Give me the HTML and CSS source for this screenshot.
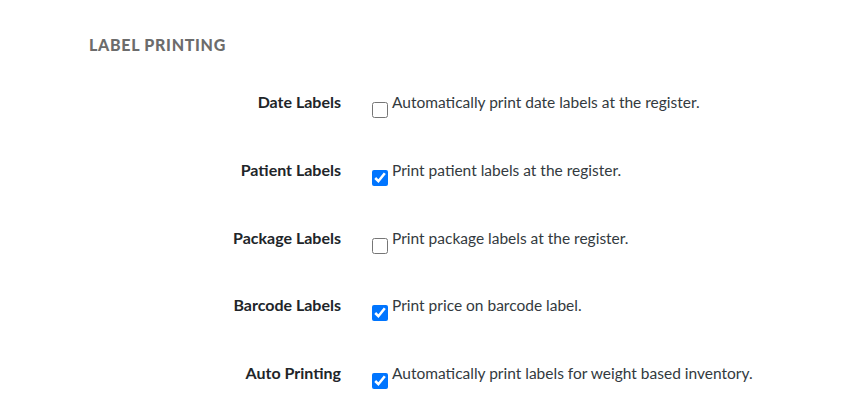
FILE: index.html
```html
<!DOCTYPE html>
<html>
<head>
<meta charset="utf-8">
<link rel="stylesheet" href="styles.css">
</head>
<body>
<section class="settings">
  <h2 class="section-title">LABEL PRINTING</h2>
  <div class="rows">
    <div class="row">
      <label class="row-label">Date Labels</label>
      <div class="row-control"><input type="checkbox" class="cb"><span class="desc">Automatically print date labels at the register.</span></div>
    </div>
    <div class="row">
      <label class="row-label">Patient Labels</label>
      <div class="row-control"><input type="checkbox" class="cb" checked><span class="desc">Print patient labels at the register.</span></div>
    </div>
    <div class="row">
      <label class="row-label">Package Labels</label>
      <div class="row-control"><input type="checkbox" class="cb"><span class="desc">Print package labels at the register.</span></div>
    </div>
    <div class="row">
      <label class="row-label">Barcode Labels</label>
      <div class="row-control"><input type="checkbox" class="cb" checked><span class="desc">Print price on barcode label.</span></div>
    </div>
    <div class="row">
      <label class="row-label">Auto Printing</label>
      <div class="row-control"><input type="checkbox" class="cb" checked><span class="desc">Automatically print labels for weight based inventory.</span></div>
    </div>
  </div>
</section>
</body>
</html>
```
FILE: styles.css
```css
html, body {
  margin: 0;
  padding: 0;
  background: #ffffff;
}
body {
  font-family: "Lato", "Liberation Sans", sans-serif;
  color: #212529;
  font-size: 15.5px;
}
.settings {
  padding: 35px 0 32px 89px;
}
.section-title {
  margin: 0;
  font-size: 16px;
  font-weight: 900;
  color: #6c6c6c;
  line-height: 20px;
  letter-spacing: 0.7px;
}
.rows {
  margin-top: 37px;
  display: flex;
  flex-direction: column;
  gap: 47.75px;
}
.row {
  display: grid;
  grid-template-columns: 252px 1fr;
  column-gap: 27px;
  align-items: start;
  height: 20px;
}
.row-label {
  text-align: right;
  font-weight: 700;
  font-size: 16px;
  line-height: 20px;
  color: #212529;
}
.row-control {
  display: flex;
  align-items: flex-start;
  line-height: 20px;
}
.cb {
  margin: 10px 4px 0 4px;
  width: 16px;
  height: 16px;
}
.desc {
  color: #333a40;
}
```
